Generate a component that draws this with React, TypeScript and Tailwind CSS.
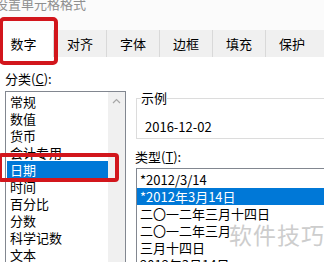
const FONT = "font-['Noto_Sans_CJK_SC','Noto_Sans',sans-serif]";

const TABS = ['对齐', '字体', '边框', '填充', '保护'];

const CATEGORIES = ['常规', '数值', '货币', '会计专用', '日期', '时间', '百分比', '分数', '科学记数', '文本'];
const SELECTED_CATEGORY = 4;

const TYPES = ['*2012/3/14', '*2012年3月14日', '二〇一二年三月十四日', '二〇一二年三月', '三月十四日', '2012年3月14日'];
const SELECTED_TYPE = 1;

function TabStrip(): React.JSX.Element {
  return (
    <div className="flex h-[27px] bg-[#f0f0f0]">
      {/* active tab */}
      <div className="-ml-[6px] flex w-[59px] shrink-0 items-center justify-center bg-white text-[13px] leading-[16px] text-black">
        数字
      </div>
      {TABS.map((t) => (
        <div
          key={t}
          className="flex w-[53px] shrink-0 items-center justify-center border-l border-[#d9d9d9] text-[13px] leading-[16px] text-black"
        >
          {t}
        </div>
      ))}
    </div>
  );
}

function CategoryList(): React.JSX.Element {
  return (
    <div className="flex h-[190px] w-[121px] border border-[#828790] bg-white">
      <div className="flex-1 pl-[1px] pt-[1px]">
        {CATEGORIES.map((c, i) => (
          <div
            key={c}
            className={[
              'h-[17px] pl-[3px] text-[13px] leading-[17px] whitespace-nowrap',
              i === SELECTED_CATEGORY ? 'bg-[#0078d7] text-white' : 'text-black',
            ].join(' ')}
          >
            {c}
          </div>
        ))}
      </div>
      {/* scrollbar */}
      <div className="flex w-[17px] shrink-0 justify-center bg-[#f0f0f0] pt-[6px]">
        <svg width="9" height="6" viewBox="0 0 9 6" className="block">
          <polyline points="1,5 4.5,1.5 8,5" fill="none" stroke="#a6a6a6" strokeWidth="1.2" />
        </svg>
      </div>
    </div>
  );
}

function TypeList(): React.JSX.Element {
  return (
    <div className="h-[120px] w-[200px] border border-[#828790] bg-white pt-[2px]">
      {TYPES.map((t, i) => (
        <div
          key={t}
          className={[
            'h-[17px] pl-[3px] text-[13px] leading-[17px] whitespace-nowrap',
            i === SELECTED_TYPE ? 'bg-[#0078d7] text-white' : 'text-black',
          ].join(' ')}
        >
          {t}
        </div>
      ))}
    </div>
  );
}

export default function App(): React.JSX.Element {
  return (
    <div className={`relative h-[262px] w-[324px] overflow-hidden bg-white ${FONT}`}>
      {/* title bar */}
      <div className="flex h-[30px] items-start bg-[#fbfbfb]">
        <div className="-ml-[5px] -mt-[3px] text-[13px] leading-[14px] text-[#8f8f8f] whitespace-nowrap">
          设置单元格格式
        </div>
      </div>

      <TabStrip />

      <div className="flex">
        {/* left: category */}
        <div className="w-[126px] shrink-0 pl-[5px]">
          <div className="pt-[14px] text-[13px] leading-[16px] text-black">
            分类(<span className="underline">C</span>):
          </div>
          <div className="mt-[4px]">
            <CategoryList />
          </div>
        </div>

        {/* right: sample + type */}
        <div className="ml-[10px] flex-1">
          <fieldset className="mt-[33px] w-[200px] border border-[#dcdcdc]">
            <legend className="ml-[4px] text-[13px] leading-[16px] text-black">示例</legend>
            <div className="pb-[3px] pl-[8px] pt-[13px] text-[13px] leading-[16px] text-black">2016-12-02</div>
          </fieldset>
          <div className="mt-[10px] -ml-[1px] text-[13px] leading-[16px] text-black">
            类型(<span className="underline">T</span>):
          </div>
          <div className="mt-[3px]">
            <TypeList />
          </div>
        </div>
      </div>

      {/* annotation boxes */}
      <div className="absolute left-[-1px] top-[17px] h-[48px] w-[59px] rounded-[5px] border-4 border-[#d2161c]" />
      <div className="absolute left-[-2px] top-[153px] h-[29px] w-[121px] rounded-[4px] border-4 border-[#d2161c]" />

      {/* watermark */}
      <div className="absolute left-[229px] top-[220px] text-[23px] leading-[28px] tracking-[1px] whitespace-nowrap text-[#cdcdcd]">
        软件技巧
      </div>
    </div>
  );
}
